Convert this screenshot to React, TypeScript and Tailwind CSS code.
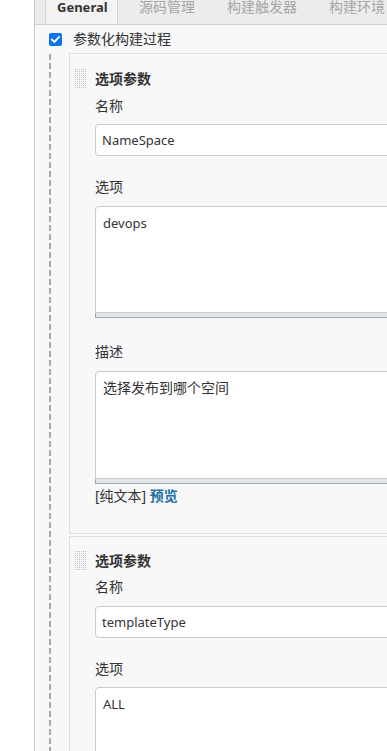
import React from "react";

const font = { fontFamily: '"Noto Sans", "Noto Sans CJK SC", sans-serif' };

function DragHandle() {
  return (
    <svg width="12" height="20" className="shrink-0">
      <defs>
        <pattern id="dots" width="2" height="2" patternUnits="userSpaceOnUse">
          <rect x="0" y="0" width="1" height="1" fill="#bdbdbd" />
        </pattern>
      </defs>
      <rect x="0" y="0" width="12" height="20" fill="url(#dots)" />
    </svg>
  );
}

function Label({ children, className = "" }: { children: React.ReactNode; className?: string }) {
  return <div className={`h-[20px] leading-[20px] text-[14px] text-[#333] ${className}`}>{children}</div>;
}

function TextInput({ value, className = "" }: { value: string; className?: string }) {
  return (
    <div
      className={`h-[32px] w-[420px] rounded-[4px] border border-[#cccccc] bg-white pl-[6px] text-[13px] leading-[30px] text-[#333] ${className}`}
    >
      {value}
    </div>
  );
}

function TextArea({ value, height, className = "" }: { value: string; height: string; className?: string }) {
  return (
    <div className={`w-[420px] ${className}`}>
      <div
        className={`${height} rounded-t-[4px] border border-[#cccccc] bg-white pl-[7px] pt-[6px] text-[#333] leading-[20px]`}
      >
        {value}
      </div>
      <div className="h-[5px] border-l border-b border-[#9ea7b0] bg-[#e3e6e9]" />
    </div>
  );
}

function Panel({ children, className = "" }: { children: React.ReactNode; className?: string }) {
  return (
    <div className={`w-[420px] border-l border-t border-b border-[#dedede] bg-[#f8f8f8] pl-[5px] ${className}`}>
      {children}
    </div>
  );
}

export default function App() {
  return (
    <div className="flex h-[751px] w-[387px] overflow-hidden bg-white" style={font}>
      <div className="w-[34px] shrink-0 bg-white" />
      <div className="flex w-[460px] shrink-0 flex-col border-l border-[#c9c9c9] bg-[#f8f8f8]">
        {/* tab bar */}
        <div className="flex h-[25px] shrink-0 border-b border-[#cfcfcf] bg-[#ececec] pl-[10px]">
          <div className="h-[24px] w-[73px] border-x border-[#d2d2d2] bg-[#f3f3f3] pl-[11px] text-[13px] font-bold leading-[14px] text-[#333]">
            General
          </div>
          <div className="ml-[5px] px-[16px] text-[14px] leading-[14px] whitespace-nowrap text-[#a6a6a6]">源码管理</div>
          <div className="px-[16px] text-[14px] leading-[14px] whitespace-nowrap text-[#a6a6a6]">构建触发器</div>
          <div className="px-[16px] text-[14px] leading-[14px] whitespace-nowrap text-[#a6a6a6]">构建环境</div>
        </div>

        {/* checkbox row */}
        <div className="mt-[7px] flex h-[14px] items-center pl-[14px]">
          <div className="flex h-[13px] w-[13px] items-center justify-center rounded-[2px] bg-[#0a74f0]">
            <svg width="11" height="11" viewBox="0 0 11 11">
              <path d="M2 5.6 L4.4 8 L9 3" fill="none" stroke="white" strokeWidth="1.9" strokeLinecap="square" />
            </svg>
          </div>
          <div className="ml-[11px] text-[14px] leading-[20px] text-[#333]">参数化构建过程</div>
        </div>

        {/* body with dashed line */}
        <div className="mt-[7px] flex flex-1">
          <div className="ml-[14px] mt-[1px] w-[2px] shrink-0 bg-[repeating-linear-gradient(to_bottom,#a9a9a9_0px,#a9a9a9_6px,transparent_6px,transparent_9px)]" />
          <div className="ml-[18px] flex flex-col">
            <Panel>
              <div className="flex items-center pt-[15px]">
                <DragHandle />
                <div className="ml-[8px] h-[20px] text-[14px] font-bold leading-[20px] text-[#333]">选项参数</div>
              </div>
              <div className="pl-[20px]">
                <Label className="mt-[7px]">名称</Label>
                <TextInput value="NameSpace" className="mt-[8px]" />
                <Label className="mt-[21px]">选项</Label>
                <TextArea value="devops" height="h-[107px]" className="mt-[9px] text-[13px]" />
                <Label className="mt-[24px]">描述</Label>
                <TextArea value="选择发布到哪个空间" height="h-[108px]" className="mt-[9px] text-[14px]" />
                <div className="mt-[2px] h-[20px] text-[14px] leading-[20px] text-[#333]">
                  [纯文本] <span className="font-bold text-[#1d6fa8]">预览</span>
                </div>
                <div className="h-[27px]" />
              </div>
            </Panel>
            <Panel className="mt-[2px]">
              <div className="flex items-center pt-[14px]">
                <DragHandle />
                <div className="ml-[8px] h-[20px] text-[14px] font-bold leading-[20px] text-[#333]">选项参数</div>
              </div>
              <div className="pl-[20px]">
                <Label className="mt-[6px]">名称</Label>
                <TextInput value="templateType" className="mt-[9px] h-[31px]" />
                <Label className="mt-[21px]">选项</Label>
                <TextArea value="ALL" height="h-[107px]" className="mt-[8px] text-[13px]" />
              </div>
            </Panel>
          </div>
        </div>
      </div>
    </div>
  );
}
